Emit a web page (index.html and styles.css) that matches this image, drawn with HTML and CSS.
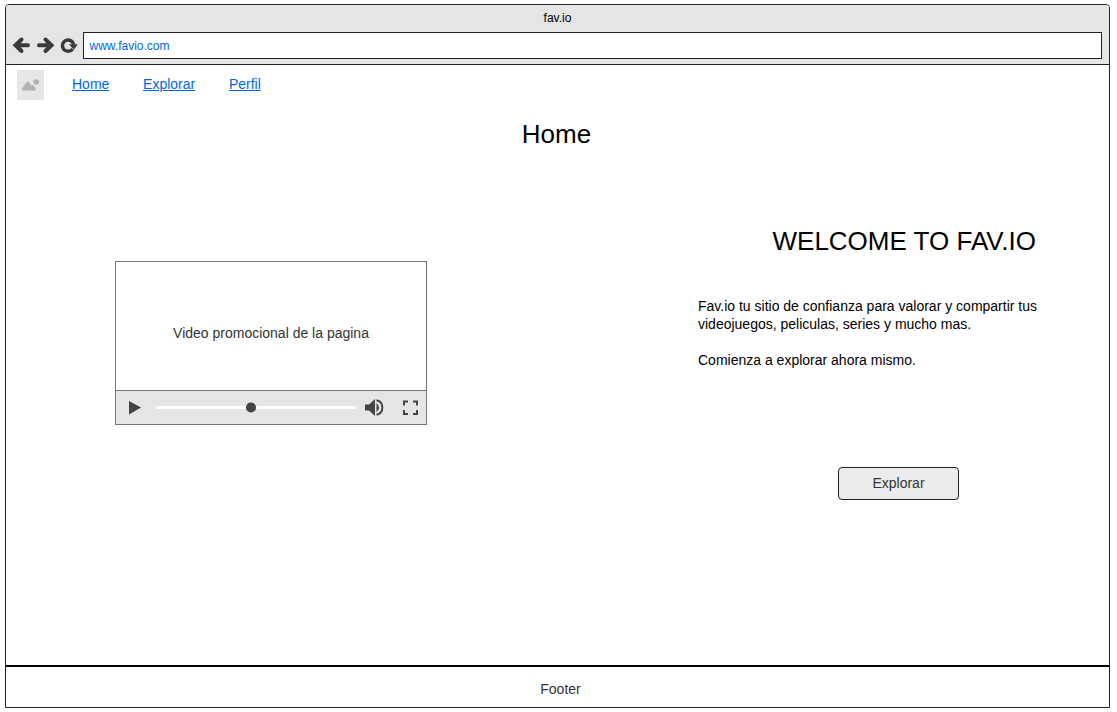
FILE: index.html
```html
<!DOCTYPE html>
<html lang="es">
<head>
<meta charset="utf-8">
<title>fav.io</title>
<link rel="stylesheet" href="styles.css">
</head>
<body>
<div class="window">
  <header class="chrome">
    <div class="chrome-title">fav.io</div>
    <div class="toolbar">
      <svg class="toolbar-icons" width="66" height="19" viewBox="0 0 66 19">
        <g fill="none" stroke="#3a3a3a" stroke-width="4" stroke-linecap="round">
          <path d="M9.500 3.500 L3.500 9.200 L9.500 15 M4 9.200 H16"/>
          <path d="M33.500 3.500 L39.500 9.200 L33.500 15 M39 9.200 H27"/>
          <path stroke-width="3.500" stroke-linecap="butt" d="M60.600 13.200 A5.700 5.700 0 1 1 61.700 8.500"/>
        </g>
        <path fill="#3a3a3a" d="M57 8.200 H65.800 L61.800 13.800 Z"/>
      </svg>
      <div class="address">www.favio.com</div>
    </div>
  </header>
  <main class="page">
    <nav class="nav">
      <svg class="logo" width="27" height="30" viewBox="0 0 27 30">
        <rect width="27" height="30" fill="#e6e6e6"/>
        <path d="M5 20.500 V18.700 L9.500 12 Q10.700 10.800 12 12 L14.300 15.500 Q15.300 14.500 16.300 15.300 L18.700 18.800 V20.500 Z" fill="#b3b3b3"/>
        <circle cx="19.300" cy="12" r="2.800" fill="#b3b3b3"/>
      </svg>
      <a class="link" href="#">Home</a>
      <a class="link" href="#">Explorar</a>
      <a class="link" href="#">Perfil</a>
    </nav>
    <h1 class="heading">Home</h1>
    <div class="columns">
      <section class="video">
        <div class="screen">Video promocional de la pagina</div>
        <svg class="controls" width="310" height="33" viewBox="0 0 310 33">
          <path d="M13 10 L25 16.500 L13 23.500 Z" fill="#444"/>
          <path d="M39.500 16.500 H240.500" stroke="#fff" stroke-width="3"/>
          <circle cx="135" cy="16.500" r="5.100" fill="#444"/>
          <path d="M249 13.500 H253 L259 8 V25 L253 19.500 H249 Z" fill="#444"/>
          <path d="M260.500 12 Q265.500 16.500 260.500 21 Z" fill="#444"/>
          <path d="M260.500 9.300 C268.300 10.800 268.300 22.200 260.500 23.700" fill="none" stroke="#444" stroke-width="2"/>
          <path d="M288 14.500 V10.500 H292 M297 10.500 H301 V14.500 M301 19 V23 H297 M292 23 H288 V19" fill="none" stroke="#444" stroke-width="2"/>
        </svg>
      </section>
      <section class="intro">
        <h2 class="welcome">WELCOME TO FAV.IO</h2>
        <p class="copy">Fav.io tu sitio de confianza para valorar y compartir tus videojuegos, peliculas, series y mucho mas.</p>
        <p class="copy">Comienza a explorar ahora mismo.</p>
        <button class="button" type="button">Explorar</button>
      </section>
    </div>
  </main>
  <footer class="footer">Footer</footer>
</div>
</body>
</html>
```
FILE: styles.css
```css
* {
  box-sizing: border-box;
}

body {
  margin: 0;
  padding: 4px 0 0 5px;
  background: #fff;
  color: #000;
  font: 14px/18px "Liberation Sans", Arial, sans-serif;
}

svg {
  display: block;
  flex: none;
}

.window {
  display: flex;
  flex-direction: column;
  width: 1105px;
  height: 704px;
  border: 1px solid #222;
  border-radius: 4px 4px 0 0;
  overflow: hidden;
}

.chrome {
  height: 60px;
  background: #e5e5e5;
  border-bottom: 1px solid #222;
  font-size: 12px;
}

.chrome-title {
  height: 27px;
  line-height: 27px;
  text-align: center;
}

.toolbar {
  display: flex;
  align-items: center;
  gap: 5px;
  padding: 0 7px 0 6px;
}

.address {
  flex: 1;
  height: 27px;
  padding-left: 5.5px;
  border: 1px solid #222;
  background: #fff;
  color: #0066e8;
  line-height: 26px;
}

.page {
  height: 600px;
}

.nav {
  display: flex;
  align-items: flex-start;
  padding: 5px 0 0 11px;
}

.link {
  margin: 5px 0 0 33.7px;
  color: #0066e8;
}

.logo + .link {
  margin-left: 28px;
}

.heading {
  margin: 18px 2px 0 0;
  font-size: 26px;
  font-weight: 400;
  line-height: 32px;
  text-align: center;
}

.columns {
  display: grid;
  grid-template-columns: 312px 360px;
  column-gap: 271px;
  align-items: start;
  padding: 75px 0 0 109px;
}

.video {
  height: 164px;
  margin-top: 36px;
  border: 1px solid #777;
}

.screen {
  display: flex;
  align-items: center;
  justify-content: center;
  height: 129px;
  padding-top: 13px;
  border-bottom: 1px solid #777;
  color: #333;
}

.controls {
  background: #e5e5e5;
}

.intro {
  display: flex;
  flex-direction: column;
}

.welcome {
  margin: 0 0 40px 74.5px;
  font-size: 26px;
  font-weight: 400;
  line-height: 32px;
  white-space: nowrap;
}

.copy {
  margin: 0 0 18px 0;
}

.button {
  width: 121px;
  height: 33px;
  margin: 80px 0 0 140px;
  padding: 0 0 2px;
  border: 1px solid #222;
  border-radius: 4px;
  background: #ebebeb;
  color: #333;
  font: inherit;
}

.footer {
  height: 42px;
  padding-left: 6px;
  border-top: 2px solid #000;
  color: #333;
  line-height: 44px;
  text-align: center;
}
```
